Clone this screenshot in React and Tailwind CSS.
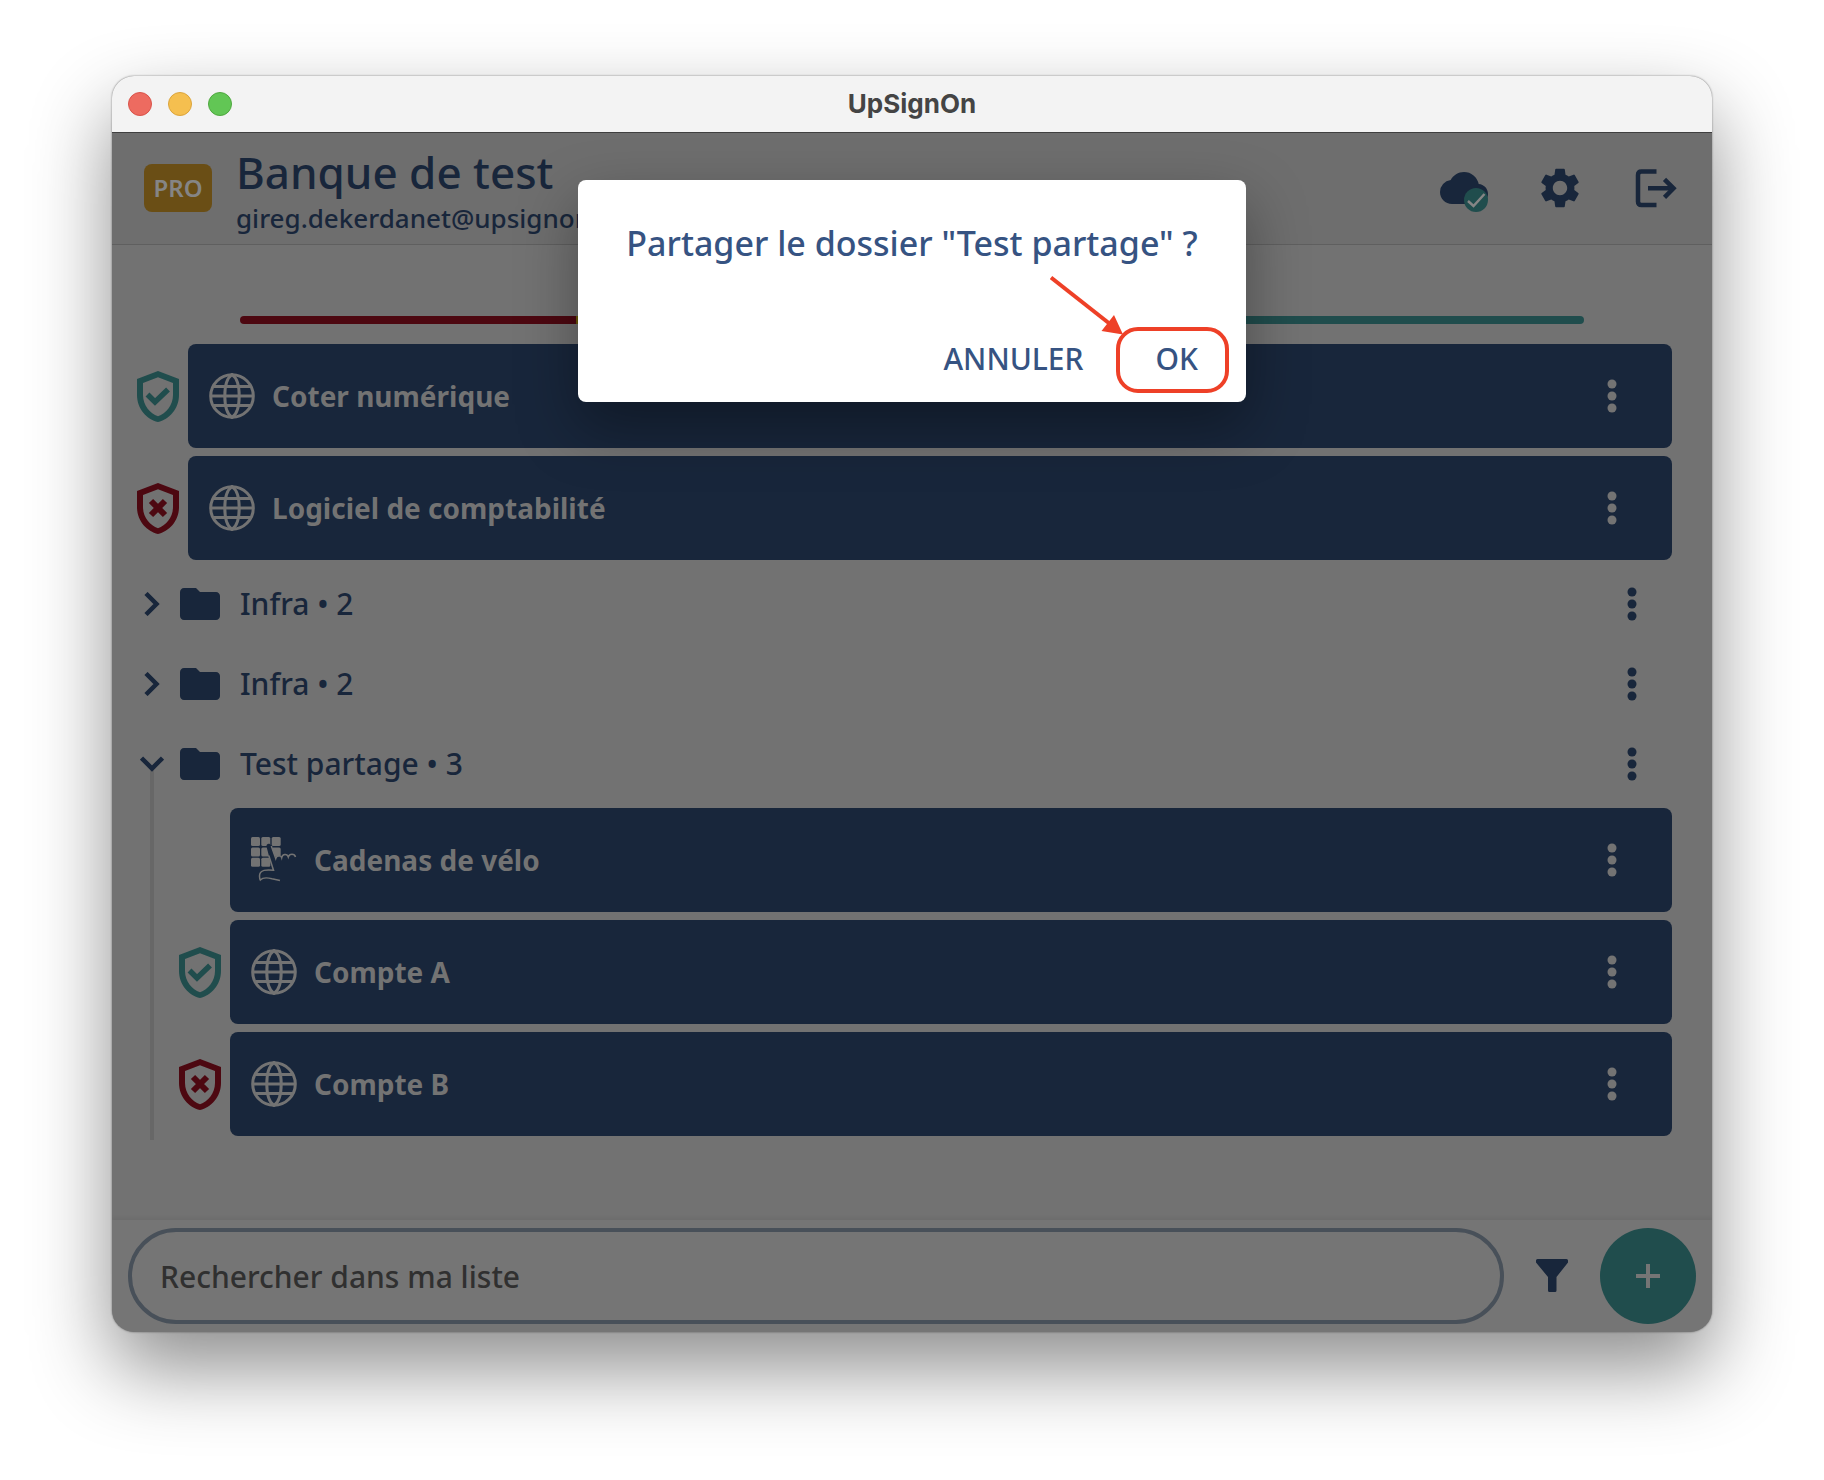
import React from 'react';
import { MdCloud, MdFolder, MdSettings } from 'react-icons/md';

const folders = [
  { id: 'infra-1', name: 'Infra', count: 2, open: false, accounts: [] },
  { id: 'infra-2', name: 'Infra', count: 2, open: false, accounts: [] },
  {
    id: 'partage',
    name: 'Test partage',
    count: 3,
    open: true,
    accounts: [
      { name: 'Cadenas de vélo', icon: 'code' },
      { name: 'Compte A', icon: 'web', security: 'good' },
      { name: 'Compte B', icon: 'web', security: 'bad' },
    ],
  },
];

const accounts = [
  { name: 'Coter numérique', icon: 'web', security: 'good' },
  { name: 'Logiciel de comptabilité', icon: 'web', security: 'bad' },
];

const Globe = () => (
  <svg className="w-[46px] h-[46px]" viewBox="0 0 46 46" fill="none" stroke="currentColor" strokeWidth="3">
    <circle cx="23" cy="23" r="21.3" />
    <path d="M15.8 23C15.8 13 18.5 4.5 23 1.5C27.5 4.5 30.2 13 30.2 23C30.2 33 27.5 41.500 23 44.5C18.5 41.5 15.8 33 15.8 23Z" />
    <path d="M2 23H44M4.5 13.500H41.5M4.500 32.5H41.5" />
  </svg>
);

const Keypad = () => (
  <svg className="w-[46px] h-[46px]" viewBox="0 0 46 46" fill="none">
    <g fill="currentColor">
      <rect x="0" y="0" width="9" height="9" rx="1.5" />
      <rect x="10.3" y="0" width="9" height="9" rx="1.5" />
      <rect x="20.7" y="0" width="9" height="9" rx="1.5" />
      <rect x="0" y="10.5" width="9" height="9" rx="1.5" />
      <rect x="10.3" y="10.5" width="9" height="9" rx="1.5" />
      <rect x="20.7" y="10.5" width="9" height="9" rx="1.5" />
      <rect x="0" y="20.7" width="9" height="9" rx="1.5" />
      <rect x="10.3" y="20.7" width="9" height="9" rx="1.5" />
    </g>
    <path d="M15.5 9.5C15 6.5 19 5.5 20 8.5L25 22L27 31H21.5L19.5 25Z" fill="#18263b" />
    <path
      d="M20.3 9L24.7 21.5C25.5 18.3 29.7 17.6 30.7 20.7C31.5 16.8 36.2 16.6 37.3 20C38.5 16.3 43.5 16.3 44.5 20M17.8 18.5L22.5 33.2C16 32.5 8.5 32.5 8.5 39C8.5 41 9 42.5 9.3 43C12 40 17 40.7 21 41.7L29 43.5"
      stroke="currentColor"
      strokeWidth="1.5"
    />
  </svg>
);

const Shield = ({ security }) => {
  const good = security === 'good';
  return (
    <svg
      className={`w-[42px] h-[51px] ${good ? 'text-[#204d4d]' : 'text-[#4d0811]'}`}
      viewBox="0 0 42 51"
      fill="none"
      role="img"
      aria-label={good ? 'Sécurité forte' : 'Sécurité faible'}
    >
      <path
        fill="currentColor"
        fillRule="evenodd"
        d="M21 0L42 8V24C42 38 32 48.5 21 51C10 48.5 0 38 0 24V8ZM21 6.300L6 12V24C6 34.5 13 42.5 21 45.2C29 42.5 36 34.5 36 24V12Z"
      />
      {good ? (
        <path d="M10.5 23.5L18 31L31 18.5" stroke="currentColor" strokeWidth="5.5" />
      ) : (
        <path d="M14 18L28 32M28 18L14 32" stroke="currentColor" strokeWidth="6" />
      )}
    </svg>
  );
};

const Dots = ({ label }) => (
  <button type="button" aria-label={label} className="flex w-12 h-12 items-center justify-center">
    <svg className="w-[10px] h-[34px]" viewBox="0 0 10 34" fill="currentColor">
      <circle cx="5" cy="5" r="4.5" />
      <circle cx="5" cy="17" r="4.5" />
      <circle cx="5" cy="29" r="4.5" />
    </svg>
  </button>
);

const Account = ({ account }) => (
  <li className="flex items-center py-1">
    <div className="w-[60px] flex justify-center shrink-0">
      {account.security && <Shield security={account.security} />}
    </div>
    <div className="flex flex-1 h-[104px] items-center gap-[17px] rounded-lg bg-[#18263b] pl-[21px] pr-9 text-[#737373]">
      {account.icon === 'web' ? <Globe /> : <Keypad />}
      <span className="flex-1 text-[28px] leading-10 font-bold">{account.name}</span>
      <Dots label={`Options de ${account.name}`} />
    </div>
  </li>
);

const Folder = ({ folder }) => (
  <li className="relative">
    {folder.open && <div className="absolute left-[22px] top-[46px] bottom-0 w-1 bg-[#676767]" />}
    <div className="relative flex h-20 items-center pr-4">
      <button
        type="button"
        aria-expanded={folder.open}
        className="flex flex-1 items-center text-left text-[30px] leading-10 font-medium"
      >
        <span className="flex w-12 justify-center">
          <svg
            className={folder.open ? 'w-6 h-6 rotate-90' : 'w-6 h-6'}
            viewBox="0 0 24 24"
            fill="none"
            stroke="currentColor"
            strokeWidth="4.5"
          >
            <path d="M6 1.5L16.5 12L6 22.5" />
          </svg>
        </span>
        <MdFolder className="w-12 h-12 mr-4" />
        {folder.name} • {folder.count}
      </button>
      <Dots label={`Options du dossier ${folder.name}`} />
    </div>
    {folder.accounts.length > 0 && (
      <ul className="pl-[42px]">
        {folder.accounts.map((account) => (
          <Account key={account.name} account={account} />
        ))}
      </ul>
    )}
  </li>
);

const Header = () => (
  <header className="flex h-[113px] items-center border-t border-t-[#3f3f3f] border-b border-b-[#5f5f5f] bg-[#6e6e6e] pl-8 pr-8 pb-0.5">
    <span className="flex w-[68px] h-12 items-center justify-center rounded-lg bg-[#6a4e15] text-2xl font-semibold text-[#858585]">
      PRO
    </span>
    <div className="ml-6 flex-1 pt-1">
      <h1 className="text-[44px] leading-[56px] font-medium">Banque de test</h1>
      <p className="text-[26px] leading-9 font-medium">gireg.dekerdanet@upsignon</p>
    </div>
    <div className="flex items-center gap-12">
      <button type="button" aria-label="Synchronisation" className="relative w-12 h-12">
        <MdCloud className="w-12 h-12" />
        <svg className="absolute left-6 top-6 w-6 h-6" viewBox="0 0 24 24" fill="none">
          <circle cx="12" cy="12" r="12" fill="#204d4d" />
          <path d="M4 13L9.5 18L20.5 6" stroke="#858585" strokeWidth="2.5" />
        </svg>
      </button>
      <button type="button" aria-label="Paramètres">
        <MdSettings className="w-12 h-12" />
      </button>
      <button type="button" aria-label="Se déconnecter">
        <svg className="w-12 h-12" viewBox="0 0 48 48" fill="none" stroke="currentColor">
          <path d="M24.5 7.500H9.500Q6 7.500 6 11V37.500Q6 41 9.500 41H24.500" strokeWidth="4.5" />
          <path d="M16 24.3H41" strokeWidth="4.5" />
          <path d="M32.5 15.300L41.5 24.3L32.5 33.3" strokeWidth="4.5" />
        </svg>
      </button>
    </div>
  </header>
);

const SearchBar = () => (
  <footer className="flex h-28 items-center bg-[#757575] px-4 shadow-[0_-2px_4px_rgba(0,0,0,0.06)]">
    <input
      type="text"
      aria-label="Rechercher dans ma liste"
      placeholder="Rechercher dans ma liste"
      className="h-24 min-w-0 flex-1 rounded-full border-4 border-[#485059] bg-transparent px-7 text-[30px] font-medium placeholder:text-[#303030]"
    />
    <button type="button" aria-label="Filtrer" className="flex w-24 h-12 items-center justify-center">
      <svg className="w-8 h-[34px]" viewBox="0 0 32 34" fill="currentColor">
        <path d="M1.5 0H30.5Q32 0 32 1.5V3.5L20.5 18V31.5Q20.5 33 19 33H13.5Q12 33 12 31.5V18L0 3.5V1.5Q0 0 1.5 0Z" />
      </svg>
    </button>
    <button
      type="button"
      aria-label="Ajouter"
      className="flex w-24 h-24 items-center justify-center rounded-full bg-[#204d4d] text-[#757575]"
    >
      <svg className="w-6 h-6" viewBox="0 0 24 24" stroke="currentColor" strokeWidth="4">
        <path d="M12 0V24M0 12H24" />
      </svg>
    </button>
  </footer>
);

const ShareDialog = () => (
  <div
    role="dialog"
    aria-labelledby="share-title"
    className="absolute left-1/2 top-[104px] w-[668px] -translate-x-1/2 rounded-lg bg-white px-12 pt-[39px] pb-[19px] text-[#365382] shadow-[0_24px_60px_rgba(0,0,0,0.35)]"
  >
    <h2 id="share-title" className="whitespace-nowrap text-center text-[34px] leading-12 font-medium">
      Partager le dossier "Test partage" ?
    </h2>
    <div className="mt-[68px] flex justify-end gap-[72px] text-[30px] leading-12 font-medium">
      <button type="button">ANNULER</button>
      <button type="button">OK</button>
    </div>
    {/* arrow pointing at the confirm button */}
    <svg
      className="pointer-events-none absolute right-4 bottom-2 w-[180px] h-[120px]"
      viewBox="0 0 180 120"
      fill="none"
    >
      <rect x="68" y="55" width="109" height="62" rx="20" stroke="#ee4027" strokeWidth="4" />
      <path d="M1 3.5L60 50" stroke="#ee4027" strokeWidth="4" />
      <path d="M73 60.500L64 41L51.500 57Z" fill="#ee4027" />
    </svg>
  </div>
);

export default function App() {
  return (
    <div className="flex min-h-screen bg-white px-28 pt-[76px] pb-[148px] font-['Noto_Sans',sans-serif] text-[#18263b]">
      <div className="relative flex flex-1 flex-col rounded-[22px] shadow-[0_0_2px_rgba(0,0,0,0.5),0_36px_80px_rgba(0,0,0,0.45)]">
        <div className="flex flex-1 flex-col overflow-hidden rounded-[22px] bg-[#727272]">
          <div className="grid h-14 grid-cols-3 items-center bg-[#f3f3f3] px-4">
            <div className="flex gap-4">
              <span className="w-6 h-6 rounded-full border border-[#d9534a] bg-[#ed6b60]" />
              <span className="w-6 h-6 rounded-full border border-[#dba43c] bg-[#f5bf4f]" />
              <span className="w-6 h-6 rounded-full border border-[#4fa73f] bg-[#62c655]" />
            </div>
            <span className="text-center font-['Inter',sans-serif] text-[26px] leading-8 font-bold text-[#444444]">
              UpSignOn
            </span>
          </div>
          <Header />
          <main className="flex-1 pt-[71px]">
            <div className="mx-32 mb-4 flex h-2 overflow-hidden rounded-full">
              <div className="flex-1 bg-[#4d0811]" />
              <div className="flex-1 bg-[#6b5a0a]" />
              <div className="flex-2 bg-[#204d4d]" />
            </div>
            <ul className="pl-4 pr-10">
              {accounts.map((account) => (
                <Account key={account.name} account={account} />
              ))}
              {folders.map((folder) => (
                <Folder key={folder.id} folder={folder} />
              ))}
            </ul>
          </main>
          <SearchBar />
        </div>
        <ShareDialog />
      </div>
    </div>
  );
}
